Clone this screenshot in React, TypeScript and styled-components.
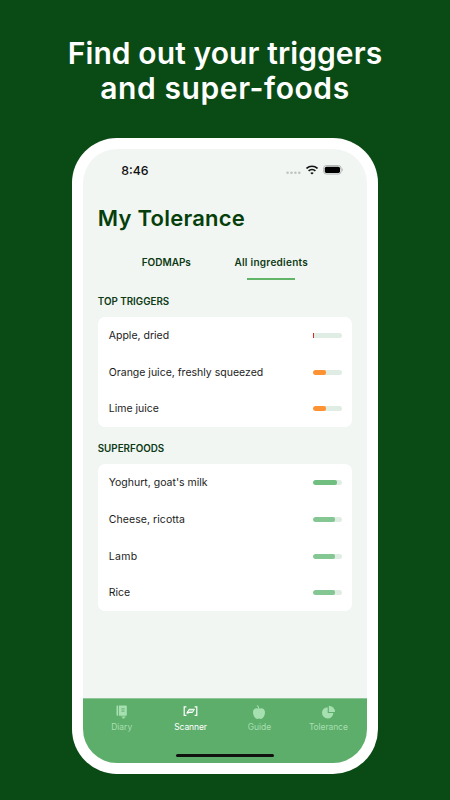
import React from 'react';
import styled, { createGlobalStyle } from 'styled-components';

const GlobalStyle = createGlobalStyle`
  * { box-sizing: border-box; }
  body { margin: 0; background: #0a4a14; font-family: Inter, sans-serif; }
`;

const Page = styled.main`
  width: 450px;
  height: 800px;
  background: #0a4a14;
  display: flex;
  flex-direction: column;
  align-items: center;
  overflow: hidden;
`;

const Headline = styled.h1`
  margin: 0;
  height: 138px;
  padding-top: 36px;
  flex: none;
  color: #fff;
  text-align: center;
  font-weight: 600;
  font-size: 30px;
  line-height: 35px;
`;

const Line = styled.span<{ $track?: number }>`
  display: block;
  white-space: nowrap;
  letter-spacing: ${(p) => p.$track ?? 0}px;
`;

const Phone = styled.div`
  width: 305.5px;
  height: 636px;
  flex: none;
  padding: 11px;
  border-radius: 45px;
  background: #fff;
`;

const Screen = styled.div`
  height: 614px;
  border-radius: 34px;
  background: #f1f6f3;
  overflow: hidden;
  display: flex;
  flex-direction: column;
`;

const StatusBar = styled.header`
  height: 42px;
  padding: 0 24px 0 38px;
  display: flex;
  align-items: center;
  justify-content: space-between;
`;

const Clock = styled.span`
  font-size: 12.3px;
  font-weight: 500;
  color: #111;
`;

const StatusIcons = styled.div`
  display: flex;
  align-items: center;
  gap: 5px;
`;

const Content = styled.section`
  flex: 1;
  padding: 0 14.5px;
  display: flex;
  flex-direction: column;
`;

const Title = styled.h2`
  margin: 11px 0 0;
  height: 34px;
  font-size: 22px;
  line-height: 33px;
  font-weight: 600;
  color: #073f0b;
  white-space: nowrap;
`;

const Tabs = styled.div`
  height: 34px;
  margin-top: 10px;
  padding-left: 16px;
  display: flex;
`;

const Tab = styled.div<{ $active?: boolean }>`
  width: 105px;
  height: 34px;
  display: flex;
  flex-direction: column;
  align-items: center;
  font-size: 10px;
  line-height: 32px;
  font-weight: 600;
  color: #0d3a14;
  white-space: nowrap;
  &::after {
    content: '';
    width: 48px;
    height: 2px;
    flex: none;
    background: ${(p) => (p.$active ? '#62b568' : 'transparent')};
  }
`;

const SectionTitle = styled.h3`
  margin: 0;
  height: 37px;
  font-size: 9.8px;
  line-height: 43px;
  font-weight: 600;
  color: #0d3a14;
`;

const Card = styled.ul`
  margin: 0;
  padding: 0 10.5px 0 11px;
  list-style: none;
  border-radius: 7px;
  background: #fff;
`;

const Row = styled.li`
  height: 36.75px;
  display: flex;
  align-items: center;
  justify-content: space-between;
  font-size: 10.5px;
  color: #1b1b1b;
`;

const Name = styled.span<{ $track?: number }>`
  letter-spacing: ${(p) => p.$track ?? 0}px;
  white-space: nowrap;
`;

const Meter = styled.div<{ $fill: number; $color: string; $flat?: boolean }>`
  width: 29px;
  height: 5px;
  border-radius: ${(p) => (p.$flat ? '0 2.5px 2.5px 0' : '2.5px')};
  background: #e0ede5;
  overflow: hidden;
  &::before {
    content: '';
    display: block;
    width: ${(p) => p.$fill}px;
    height: 5px;
    border-radius: ${(p) => (p.$flat ? 0 : 2)}px;
    background: ${(p) => p.$color};
  }
`;

const BottomBar = styled.nav`
  height: 65px;
  padding: 6px 4px 4px;
  background: #5dae6b;
  border-top: 1px solid #8dc798;
  display: flex;
  flex-direction: column;
  align-items: center;
  justify-content: space-between;
`;

const NavItems = styled.div`
  align-self: stretch;
  display: flex;
`;

const NavItem = styled.div<{ $active?: boolean }>`
  width: 69px;
  display: flex;
  flex-direction: column;
  align-items: center;
  font-size: 8.5px;
  line-height: 15px;
  color: ${(p) => (p.$active ? '#fff' : '#a6dfb0')};
  svg { display: block; }
`;

const Label = styled.span<{ $track?: number }>`
  letter-spacing: ${(p) => p.$track ?? 0}px;
`;

const HomeIndicator = styled.div`
  width: 98px;
  height: 3.5px;
  margin-bottom: 2px;
  border-radius: 2px;
  background: #111;
`;

const SignalDots = () => (
  <svg width="15" height="12" viewBox="0 0 15 12" fill="#bfc3c1">
    <circle cx="1.6" cy="8.8" r="1.3" />
    <circle cx="5.5" cy="8.8" r="1.3" />
    <circle cx="9.4" cy="8.8" r="1.3" />
    <circle cx="13.3" cy="8.8" r="1.3" />
  </svg>
);

const Wifi = () => (
  <svg width="12" height="10" viewBox="0 0 12 10" fill="none" stroke="#111" strokeWidth="1.6">
    <path d="M.5 3.5C3.6.5 8.4.5 11.5 3.5" />
    <path d="M2.6 5.9c1.9-1.8 4.9-1.8 6.8 0" />
    <path d="M6 9.6 4.3 7.9c1-.9 2.4-.9 3.4 0Z" fill="#111" stroke="none" />
  </svg>
);

const Battery = () => (
  <svg width="20" height="10" viewBox="0 0 20 10">
    <rect x=".7" y=".6" width="17.4" height="8.4" rx="2.6" fill="none" stroke="#aeb2b0" />
    <rect x="1.8" y="1.7" width="15.2" height="6.2" rx="1.6" fill="#000" />
    <path d="M19 3.3c1 .5 1 2.5 0 3Z" fill="#aeb2b0" />
  </svg>
);

const DiaryIcon = () => (
  <svg width="14" height="15" viewBox="0 0 14 15" fill="#a6dfb0">
    <path d="M3.2.5v10.200H2.400a.9.9 0 0 1-.9-.9V1.400a.9.9 0 0 1 .9-.9Z" />
    <path d="M4 .5h6.800c.6 0 1 .4 1 1v8.200c0 .6-.4 1-1 1H4Z" />
    <path d="M6.400 3.900h3.200M6.400 6.100h3.200" stroke="#5dae6b" strokeWidth="1" />
    <path d="M6.600 11.500h3.800v1.100H9.400v1H7.600v-1h-1Z" />
  </svg>
);

const ScannerIcon = () => (
  <svg width="15" height="15" viewBox="0 0 15 15" fill="none" stroke="#fff" strokeWidth="1.2">
    <path d="M3.400 1.800H1.200v8.600h2.200M11.600 1.800h2.200v8.600h-2.200" />
    <path d="M6 4.300h5.400L9.500 7.500H4.200Z" fill="#fff" fillOpacity=".4" strokeWidth="1" />
    <path d="M5.800 5.100 3.700 8.300h2" strokeWidth=".8" />
  </svg>
);

const AppleIcon = () => (
  <svg width="14" height="15" viewBox="0 0 14 15" fill="#a6dfb0">
    <path d="M7 3.800C5 2.600 1 3 1 7.200c0 3.600 2.200 6.700 4.400 6.700.7 0 1-.3 1.600-.3s.9.3 1.600.3c2.200 0 4.400-3.100 4.400-6.700C13 3 9 2.600 7 3.800Z" />
    <path d="M6.900 4C6.900 2 6.100 1 4.900.5" fill="none" stroke="#a6dfb0" strokeWidth="1.1" />
  </svg>
);

const PieIcon = () => (
  <svg width="15" height="15" viewBox="0 0 15 15" fill="#a6dfb0">
    <path d="M6.700 2.200V8.100H12.400A5.700 5.700 0 1 1 6.700 2.200Z" />
    <path d="M7.800.8A6.200 6.200 0 0 1 14 7H7.800Z" />
  </svg>
);

type Item = { name: string; track?: number; fill: number; color: string; flat?: boolean };

const triggers: Item[] = [
  { name: 'Apple, dried', fill: 1.5, color: '#e52222', flat: true },
  { name: 'Orange juice, freshly squeezed', fill: 13.5, color: '#ff9233' },
  { name: 'Lime juice', fill: 13.5, color: '#ff9233' },
];

const superfoods: Item[] = [
  { name: "Yoghurt, goat's milk", fill: 24.5, color: '#70bf80' },
  { name: 'Cheese, ricotta', track: 0.07, fill: 22.2, color: '#84c793' },
  { name: 'Lamb', track: 0.3, fill: 22.2, color: '#84c793' },
  { name: 'Rice', fill: 22.2, color: '#84c793' },
];

const FoodCard = ({ items }: { items: Item[] }) => (
  <Card>
    {items.map((item) => (
      <Row key={item.name}>
        <Name $track={item.track}>{item.name}</Name>
        <Meter $fill={item.fill} $color={item.color} $flat={item.flat} />
      </Row>
    ))}
  </Card>
);

export default function App() {
  return (
    <Page>
      <GlobalStyle />
      <Headline>
        <Line $track={0.1}>Find out your triggers</Line>
        <Line $track={0.6}>and super-foods</Line>
      </Headline>
      <Phone>
        <Screen>
          <StatusBar>
            <Clock>8:46</Clock>
            <StatusIcons>
              <SignalDots />
              <Wifi />
              <Battery />
            </StatusIcons>
          </StatusBar>
          <Content>
            <Title><Line $track={0.25}>My Tolerance</Line></Title>
            <Tabs>
              <Tab><Line>FODMAPs</Line></Tab>
              <Tab $active><Line $track={0.28}>All ingredients</Line></Tab>
            </Tabs>
            <SectionTitle><Line>TOP TRIGGERS</Line></SectionTitle>
            <FoodCard items={triggers} />
            <SectionTitle><Line>SUPERFOODS</Line></SectionTitle>
            <FoodCard items={superfoods} />
          </Content>
          <BottomBar>
            <NavItems>
              <NavItem><DiaryIcon /><Label>Diary</Label></NavItem>
              <NavItem $active><ScannerIcon /><Label $track={-0.1}>Scanner</Label></NavItem>
              <NavItem><AppleIcon /><Label>Guide</Label></NavItem>
              <NavItem><PieIcon /><Label $track={-0.1}>Tolerance</Label></NavItem>
            </NavItems>
            <HomeIndicator />
          </BottomBar>
        </Screen>
      </Phone>
    </Page>
  );
}
